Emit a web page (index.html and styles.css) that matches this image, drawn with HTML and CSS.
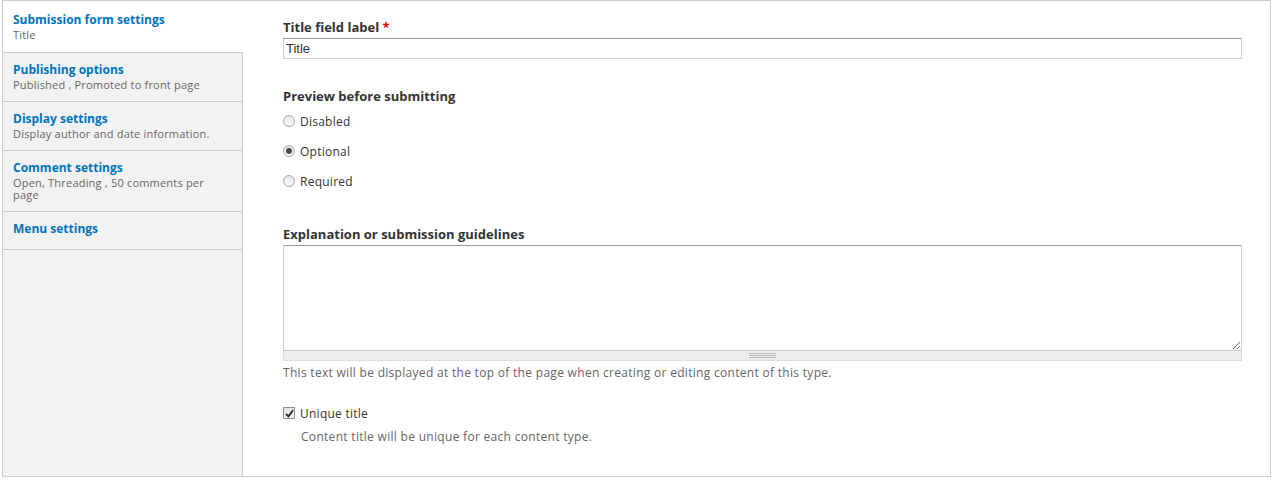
FILE: index.html
```html
<!DOCTYPE html>
<html lang="en">
<head>
  <meta charset="UTF-8">
  <title>Content type settings</title>
  <link rel="stylesheet" href="styles.css">
</head>
<body>
  <div class="vertical-tabs">
    <ul class="tabs-list">
      <li class="tab selected">
        <a class="tab-title" href="#">Submission form settings</a>
        <span class="summary">Title</span>
      </li>
      <li class="tab">
        <a class="tab-title" href="#">Publishing options</a>
        <span class="summary">Published , Promoted to front page</span>
      </li>
      <li class="tab">
        <a class="tab-title" href="#">Display settings</a>
        <span class="summary">Display author and date information.</span>
      </li>
      <li class="tab">
        <a class="tab-title" href="#">Comment settings</a>
        <span class="summary">Open, Threading , 50 comments per page</span>
      </li>
      <li class="tab">
        <a class="tab-title" href="#">Menu settings</a>
      </li>
    </ul>

    <div class="tab-pane">
      <div class="form-item">
        <label class="field-label" for="title-label">Title field label <span class="required">*</span></label>
        <input class="form-text" id="title-label" type="text" value="Title">
      </div>

      <div class="form-item radios">
        <div class="field-label">Preview before submitting</div>
        <label class="option"><span class="radio"></span>Disabled</label>
        <label class="option"><span class="radio checked"></span>Optional</label>
        <label class="option"><span class="radio"></span>Required</label>
      </div>

      <div class="form-item">
        <label class="field-label" for="help">Explanation or submission guidelines</label>
        <div class="resizable">
          <textarea id="help" class="form-textarea"></textarea>
          <div class="grippie"><span></span></div>
        </div>
        <div class="description">This text will be displayed at the top of the page when creating or editing content of this type.</div>
      </div>

      <div class="form-item checkbox-item">
        <label class="option"><span class="checkbox checked">
          <svg width="9" height="9" viewBox="0 0 9 9"><path d="M1 4.8 L3.4 7.3 L8 1.2" fill="none" stroke="#222" stroke-width="1.8"/></svg>
        </span>Unique title</label>
        <div class="description indented">Content title will be unique for each content type.</div>
      </div>
    </div>
  </div>
</body>
</html>
```

FILE: styles.css
```css
body {
  margin: 0;
  font-family: "Open Sans", "DejaVu Sans", sans-serif;
  font-size: 12px;
  color: #333;
  background: #fff;
}

.vertical-tabs {
  display: flex;
  margin: 0 3px 0 2px;
  height: 475px;
  border: 1px solid #ccc;
}

.tabs-list {
  list-style: none;
  margin: 0;
  padding: 0;
  width: 239px;
  flex-shrink: 0;
  background: #f2f2f2;
  border-right: 1px solid #ccc;
}

.tab {
  padding: 9px 28px 10px 10px;
  border-bottom: 1px solid #ccc;
}

.tab:last-child {
  padding-bottom: 12px;
}

.tab.selected {
  background: #fff;
  margin-right: -1px;
  padding-top: 11px;
  padding-bottom: 11px;
}

.tab-title {
  display: block;
  color: #0074bd;
  font-weight: bold;
  font-size: 12px;
  line-height: 16px;
  text-decoration: none;
}

.summary {
  display: block;
  margin-top: 1px;
  color: #666;
  font-size: 11px;
  line-height: 12px;
  letter-spacing: 0.2px;
}

.tab-pane {
  flex: 1;
  padding: 17px 28px 0 40px;
}

.field-label {
  display: block;
  font-weight: bold;
  font-size: 13px;
  line-height: 18px;
  color: #333;
}

.required {
  color: #e00;
}

.form-item {
  margin-bottom: 28px;
}

.form-text {
  display: block;
  box-sizing: border-box;
  width: 100%;
  height: 21px;
  margin-top: 2px;
  padding: 1px 2px;
  border: 1px solid #ccc;
  border-top-color: #999;
  font-family: "Liberation Sans", Arial, sans-serif;
  font-size: 13px;
  color: #333;
}

.radios {
  margin-bottom: 35px;
}

.radios .field-label {
  margin-bottom: 7px;
}

.option {
  display: flex;
  align-items: center;
  height: 18px;
  margin-bottom: 12px;
  font-size: 12px;
  letter-spacing: 0.25px;
}

.radio {
  box-sizing: border-box;
  width: 12px;
  height: 12px;
  margin-right: 5px;
  border: 1px solid #a8a8a8;
  border-radius: 50%;
  background: linear-gradient(#e6e6e6, #fbfbfb);
  display: flex;
  align-items: center;
  justify-content: center;
}

.radio.checked::after {
  content: "";
  width: 6px;
  height: 6px;
  border-radius: 50%;
  background: #4a4a4a;
}

.resizable {
  margin-top: 2px;
}

.form-textarea {
  display: block;
  box-sizing: border-box;
  width: 100%;
  height: 106px;
  margin: 0;
  border: 1px solid #ccc;
  border-top-color: #999;
  resize: both;
}

.grippie {
  height: 9px;
  background: #eee;
  border: 1px solid #ddd;
  border-top: none;
  display: flex;
  justify-content: center;
  align-items: center;
}

.grippie span {
  width: 27px;
  height: 5px;
  background: repeating-linear-gradient(#bbb 0 1px, transparent 1px 2px);
}

.description {
  margin-top: 4px;
  font-size: 12px;
  line-height: 16px;
  letter-spacing: 0.3px;
  color: #666;
}

.description.indented {
  margin-top: -5px;
  padding-left: 18px;
}

.checkbox-item {
  margin-top: -5px;
}

.checkbox {
  box-sizing: border-box;
  width: 12px;
  height: 12px;
  margin-right: 5px;
  border: 1px solid #8f8f8f;
  background: linear-gradient(#e3e3e3, #f8f8f8);
  display: flex;
  align-items: center;
  justify-content: center;
}
```
